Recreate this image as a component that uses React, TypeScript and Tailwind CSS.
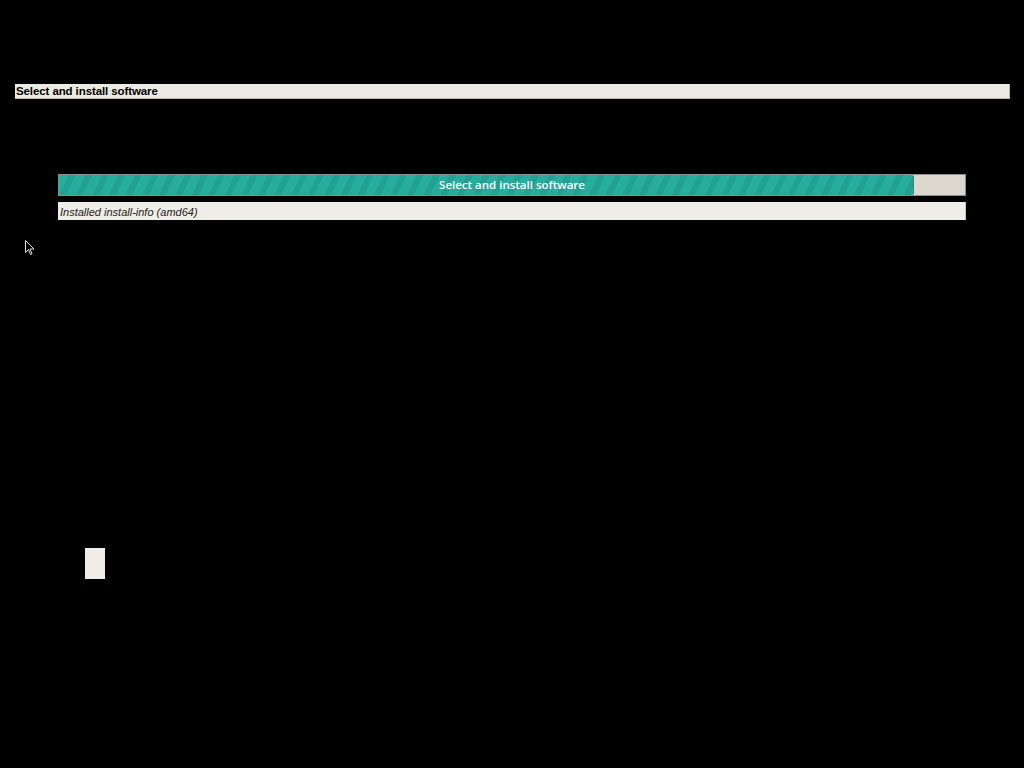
import React from "react";

const Cursor = () => (
  <svg width="10" height="16" viewBox="0 0 10 16" className="absolute left-[25px] top-[240px]">
    <path d="M0.5 0.5 L0.5 12.5 L3.5 9.5 L5.5 14.5 L7 13.8 L5 9 L9 9 Z" fill="#000" stroke="#ddd" strokeWidth="1" />
  </svg>
);

export default function App() {
  return (
    <div className="relative w-[1024px] h-[768px] overflow-hidden bg-black font-['Liberation_Sans',sans-serif]">
      <div className="pt-[84px] pl-[15px]">
        {/* window title */}
        <div className="w-[995px] h-[15px] bg-[#ecebe3] flex items-center pt-[1px] pl-[1px] text-[11.5px] font-bold leading-none text-black tracking-[-0.1px] border-r border-b border-[#b8b8b0]">
          Select and install software
        </div>

        {/* progress area */}
        <div className="ml-[43px] mt-[75px] w-[908px] flex flex-col gap-[6px]">
          <div className="relative h-[22px] bg-[#dcd8cf] border border-[#8f8f8a]">
            <div className="h-full w-[855px] rounded-r-[2px] border-r border-[#1b8f82] bg-[repeating-linear-gradient(115deg,#27ad9e_0px,#27ad9e_9px,#22a193_9px,#22a193_15px)]" />
            <div className="absolute inset-0 flex items-center justify-center text-[11.5px] font-semibold text-white font-['Open_Sans',sans-serif]">
              Select and install software
            </div>
          </div>
          <div className="h-[18px] bg-[#efede7] border-r border-[#c8c6c0] flex items-center pt-[2px] pl-[2px] text-[11px] italic text-[#222]">
            Installed install-info (amd64)
          </div>
        </div>

        {/* leftover widget */}
        <div className="ml-[70px] mt-[328px] w-[20px] h-[31px] bg-[#efede6]" />
      </div>
      <Cursor />
    </div>
  );
}
